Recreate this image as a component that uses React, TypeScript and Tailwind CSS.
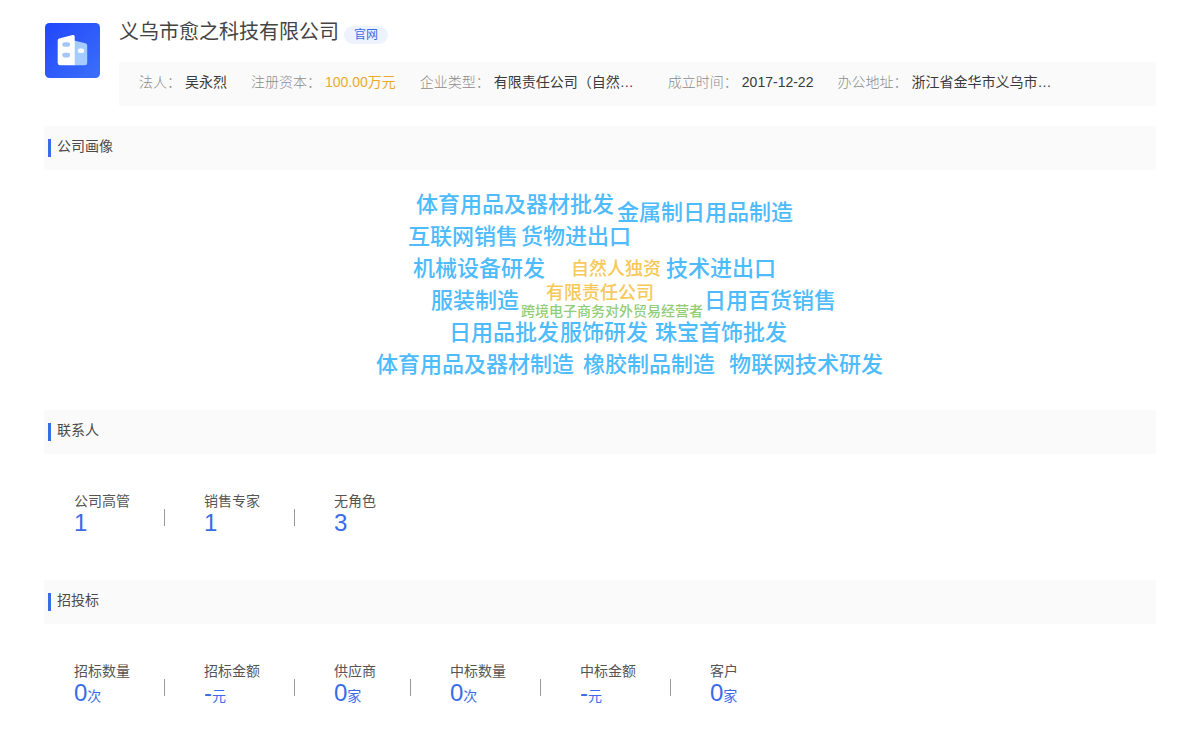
type Word = { text: string; x: number; y: number; level: "lg" | "md" | "sm" };
type Stat = { label: string; value: string; unit?: string };

const facts = [
  { label: "法人：", value: "吴永烈" },
  { label: "注册资本：", value: "100.00万元", highlight: true },
  { label: "企业类型：", value: "有限责任公司（自然…", wide: true },
  { label: "成立时间：", value: "2017-12-22" },
  { label: "办公地址：", value: "浙江省金华市义乌市…", wide: true },
];

// x is the left edge and y the vertical centre of each word on the canvas
const words: Word[] = [
  { text: "体育用品及器材批发", x: 116, y: 35, level: "lg" },
  { text: "金属制日用品制造", x: 317, y: 43, level: "lg" },
  { text: "互联网销售", x: 108, y: 67, level: "lg" },
  { text: "货物进出口", x: 221, y: 67, level: "lg" },
  { text: "机械设备研发", x: 113, y: 99, level: "lg" },
  { text: "自然人独资", x: 271, y: 99, level: "md" },
  { text: "技术进出口", x: 366, y: 99, level: "lg" },
  { text: "有限责任公司", x: 246, y: 123, level: "md" },
  { text: "服装制造", x: 131, y: 131, level: "lg" },
  { text: "跨境电子商务对外贸易经营者", x: 221, y: 141, level: "sm" },
  { text: "日用百货销售", x: 404, y: 131, level: "lg" },
  { text: "日用品批发", x: 149, y: 163, level: "lg" },
  { text: "服饰研发", x: 260, y: 163, level: "lg" },
  { text: "珠宝首饰批发", x: 355, y: 163, level: "lg" },
  { text: "体育用品及器材制造", x: 76, y: 195, level: "lg" },
  { text: "橡胶制品制造", x: 283, y: 195, level: "lg" },
  { text: "物联网技术研发", x: 429, y: 195, level: "lg" },
];

const wordStyles = {
  lg: "text-[22px] text-[#4dbbfc]",
  md: "text-[18px] text-[#f8c858]",
  sm: "text-[14px] text-[#93cd76]",
};

const contacts: Stat[] = [
  { label: "公司高管", value: "1" },
  { label: "销售专家", value: "1" },
  { label: "无角色", value: "3" },
];

const bids: Stat[] = [
  { label: "招标数量", value: "0", unit: "次" },
  { label: "招标金额", value: "-", unit: "元" },
  { label: "供应商", value: "0", unit: "家" },
  { label: "中标数量", value: "0", unit: "次" },
  { label: "中标金额", value: "-", unit: "元" },
  { label: "客户", value: "0", unit: "家" },
];

function CompanyLogo() {
  return (
    <svg className="mt-[22px] size-14 shrink-0" viewBox="0 0 56 56" aria-hidden="true">
      <defs>
        <linearGradient id="logo-bg" x1="0" y1="0" x2="1" y2="1">
          <stop offset="0" stopColor="#2146fb" />
          <stop offset="1" stopColor="#3b70fa" />
        </linearGradient>
      </defs>
      <rect x="1" y="1" width="55" height="55" rx="4.5" fill="url(#logo-bg)" />
      <path d="M30 18.5L41.5 21.2Q43.2 21.6 43.2 23.4V41Q43.2 43.3 41 43.3H30Z" fill="#a5cbff" />
      <path d="M15.2 16.6L28.6 13Q30.7 12.5 30.7 14.4V43.3H16Q13.7 43.3 13.7 41V18.6Q13.7 17 15.2 16.6Z" fill="#fff" />
      <rect x="18.2" y="20.2" width="8" height="4.6" rx="2.3" fill="#a5c6f8" />
      <rect x="18.2" y="30.8" width="8" height="4.6" rx="2.3" fill="#a5c6f8" />
      <rect x="33.8" y="26.6" width="6.4" height="4.4" rx="2.2" fill="#fff" />
    </svg>
  );
}

function SectionTitle({ children }: { children: string }) {
  return (
    <div className="flex h-11 items-center gap-1.5 bg-[#fafafa] pl-1">
      <span className="h-[18px] w-[3px] bg-[#3a6be8]" />
      <h2 className="pb-1 text-sm leading-5 text-[#4a4a4a]">{children}</h2>
    </div>
  );
}

function StatRow({ stats }: { stats: Stat[] }) {
  return (
    <dl className="flex h-[126px] pt-[37px] pl-[30px]">
      {stats.map((stat, i) => (
        <div key={stat.label} className="flex">
          {i > 0 && <span className="mt-[18px] mr-[39px] ml-[34px] h-[17px] w-px bg-[#999]" />}
          <div>
            <dt className="text-sm leading-5 text-[#555]">{stat.label}</dt>
            <dd className="text-2xl leading-6 text-[#3a6be8]">
              {stat.value}
              {stat.unit && <span className="text-sm leading-5">{stat.unit}</span>}
            </dd>
          </div>
        </div>
      ))}
    </dl>
  );
}

export default function App() {
  return (
    <main
      lang="zh-CN"
      className="min-h-screen bg-white px-11 font-['Liberation_Sans','Noto_Sans_CJK_SC',sans-serif]"
    >
      <header className="mb-5 flex gap-[19px]">
        <CompanyLogo />
        <div className="min-w-0 flex-1 pt-[17px]">
          <div className="mb-[15px] flex items-center gap-[5px]">
            <h1 className="text-xl leading-[30px] text-[#444]">义乌市愈之科技有限公司</h1>
            <a href="#" className="mt-1.5 rounded-full bg-[#edf2fd] px-2.5 text-xs leading-[18px] text-[#3a6be8]">
              官网
            </a>
          </div>
          <dl className="flex gap-6 bg-[#fafafa] px-5 pt-2.5 pb-3.5 text-sm leading-5">
            {facts.map((fact) => (
              <div key={fact.label} className="flex gap-1 whitespace-nowrap">
                <dt className="font-light text-[#8c8c8c]">{fact.label}</dt>
                <dd
                  className={`${fact.highlight ? "text-[#eba92f]" : "text-[#3a3a3a]"} ${fact.wide ? "w-[150px]" : ""}`}
                >
                  {fact.value}
                </dd>
              </div>
            ))}
          </dl>
        </div>
      </header>

      <section>
        <SectionTitle>公司画像</SectionTitle>
        <div className="relative mx-auto h-60 w-[600px]">
          {words.map((word) => (
            <span
              key={word.text}
              className={`absolute -translate-y-1/2 leading-8 font-medium whitespace-nowrap ${wordStyles[word.level]}`}
              style={{ left: word.x, top: word.y }}
            >
              {word.text}
            </span>
          ))}
        </div>
      </section>

      <section>
        <SectionTitle>联系人</SectionTitle>
        <StatRow stats={contacts} />
      </section>

      <section>
        <SectionTitle>招投标</SectionTitle>
        <StatRow stats={bids} />
      </section>
    </main>
  );
}
